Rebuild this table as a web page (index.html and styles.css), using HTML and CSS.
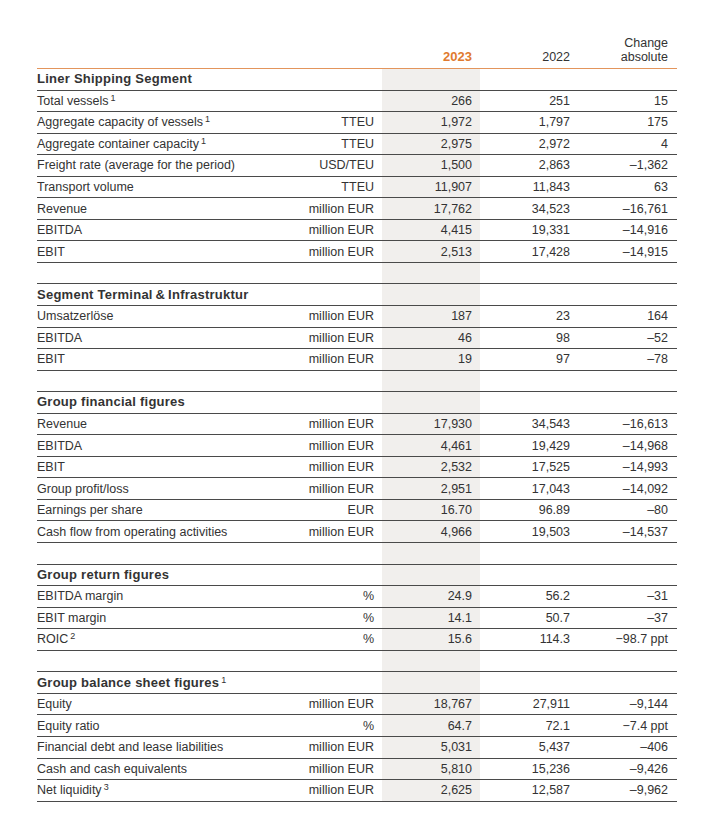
FILE: index.html
```html
<!DOCTYPE html>
<html lang="en">
<head>
<meta charset="utf-8">
<title>Key figures</title>
<link rel="stylesheet" href="styles.css">
</head>
<body>
<table class="kf">
  <colgroup>
    <col class="c-label"><col class="c-unit"><col class="c-cur"><col class="c-prev"><col class="c-chg">
  </colgroup>
  <thead>
    <tr>
      <th></th><th></th>
      <th class="num cur-h">2023</th>
      <th class="num">2022</th>
      <th class="num">Change<br>absolute</th>
    </tr>
  </thead>
  <tbody>
    <tr class="title"><td colspan="2">Liner Shipping Segment</td><td class="cur"></td><td></td><td></td></tr>
    <tr><td>Total vessels<sup>1</sup></td><td class="unit"></td><td class="num cur">266</td><td class="num">251</td><td class="num">15</td></tr>
    <tr><td>Aggregate capacity of vessels<sup>1</sup></td><td class="unit">TTEU</td><td class="num cur">1,972</td><td class="num">1,797</td><td class="num">175</td></tr>
    <tr><td>Aggregate container capacity<sup>1</sup></td><td class="unit">TTEU</td><td class="num cur">2,975</td><td class="num">2,972</td><td class="num">4</td></tr>
    <tr><td>Freight rate (average for the period)</td><td class="unit">USD/TEU</td><td class="num cur">1,500</td><td class="num">2,863</td><td class="num">–1,362</td></tr>
    <tr><td>Transport volume</td><td class="unit">TTEU</td><td class="num cur">11,907</td><td class="num">11,843</td><td class="num">63</td></tr>
    <tr><td>Revenue</td><td class="unit">million EUR</td><td class="num cur">17,762</td><td class="num">34,523</td><td class="num">–16,761</td></tr>
    <tr><td>EBITDA</td><td class="unit">million EUR</td><td class="num cur">4,415</td><td class="num">19,331</td><td class="num">–14,916</td></tr>
    <tr><td>EBIT</td><td class="unit">million EUR</td><td class="num cur">2,513</td><td class="num">17,428</td><td class="num">–14,915</td></tr>
    <tr class="gap"><td colspan="2"></td><td class="cur"></td><td></td><td></td></tr>

    <tr class="title"><td colspan="2">Segment Terminal&#8201;&amp;&#8201;Infrastruktur</td><td class="cur"></td><td></td><td></td></tr>
    <tr><td>Umsatzerlöse</td><td class="unit">million EUR</td><td class="num cur">187</td><td class="num">23</td><td class="num">164</td></tr>
    <tr><td>EBITDA</td><td class="unit">million EUR</td><td class="num cur">46</td><td class="num">98</td><td class="num">–52</td></tr>
    <tr><td>EBIT</td><td class="unit">million EUR</td><td class="num cur">19</td><td class="num">97</td><td class="num">–78</td></tr>
    <tr class="gap"><td colspan="2"></td><td class="cur"></td><td></td><td></td></tr>

    <tr class="title"><td colspan="2">Group financial figures</td><td class="cur"></td><td></td><td></td></tr>
    <tr><td>Revenue</td><td class="unit">million EUR</td><td class="num cur">17,930</td><td class="num">34,543</td><td class="num">–16,613</td></tr>
    <tr><td>EBITDA</td><td class="unit">million EUR</td><td class="num cur">4,461</td><td class="num">19,429</td><td class="num">–14,968</td></tr>
    <tr><td>EBIT</td><td class="unit">million EUR</td><td class="num cur">2,532</td><td class="num">17,525</td><td class="num">–14,993</td></tr>
    <tr><td>Group profit/loss</td><td class="unit">million EUR</td><td class="num cur">2,951</td><td class="num">17,043</td><td class="num">–14,092</td></tr>
    <tr><td>Earnings per share</td><td class="unit">EUR</td><td class="num cur">16.70</td><td class="num">96.89</td><td class="num">–80</td></tr>
    <tr><td>Cash flow from operating activities</td><td class="unit">million EUR</td><td class="num cur">4,966</td><td class="num">19,503</td><td class="num">–14,537</td></tr>
    <tr class="gap"><td colspan="2"></td><td class="cur"></td><td></td><td></td></tr>

    <tr class="title"><td colspan="2">Group return figures</td><td class="cur"></td><td></td><td></td></tr>
    <tr><td>EBITDA margin</td><td class="unit">%</td><td class="num cur">24.9</td><td class="num">56.2</td><td class="num">–31</td></tr>
    <tr><td>EBIT margin</td><td class="unit">%</td><td class="num cur">14.1</td><td class="num">50.7</td><td class="num">–37</td></tr>
    <tr><td>ROIC<sup>2</sup></td><td class="unit">%</td><td class="num cur">15.6</td><td class="num">114.3</td><td class="num">−98.7 ppt</td></tr>
    <tr class="gap"><td colspan="2"></td><td class="cur"></td><td></td><td></td></tr>

    <tr class="title"><td colspan="2">Group balance sheet figures<sup>1</sup></td><td class="cur"></td><td></td><td></td></tr>
    <tr><td>Equity</td><td class="unit">million EUR</td><td class="num cur">18,767</td><td class="num">27,911</td><td class="num">–9,144</td></tr>
    <tr><td>Equity ratio</td><td class="unit">%</td><td class="num cur">64.7</td><td class="num">72.1</td><td class="num">−7.4 ppt</td></tr>
    <tr><td>Financial debt and lease liabilities</td><td class="unit">million EUR</td><td class="num cur">5,031</td><td class="num">5,437</td><td class="num">–406</td></tr>
    <tr><td>Cash and cash equivalents</td><td class="unit">million EUR</td><td class="num cur">5,810</td><td class="num">15,236</td><td class="num">–9,426</td></tr>
    <tr><td>Net liquidity<sup>3</sup></td><td class="unit">million EUR</td><td class="num cur">2,625</td><td class="num">12,587</td><td class="num">–9,962</td></tr>
  </tbody>
</table>
</body>
</html>
```

FILE: styles.css
```css
html, body {
  margin: 0;
  padding: 0;
  background: #ffffff;
}

body {
  padding: 36px 0 0 37px;
  font-family: "Liberation Sans", Arial, sans-serif;
  font-size: 12.5px;
  color: #333333;
}

.kf {
  border-collapse: collapse;
  table-layout: fixed;
  width: 640px;
}

.c-label { width: 263px; }
.c-unit  { width: 82px; }
.c-cur   { width: 98px; }
.c-prev  { width: 98px; }
.c-chg   { width: 99px; }

.kf th {
  font-weight: normal;
  line-height: 14px;
  padding: 0 8px 4px 0;
  vertical-align: bottom;
  border-bottom: 1px solid #e3955c;
}

.kf th:last-child { padding-right: 9px; }

.kf th.cur-h {
  color: #e07a2f;
  font-weight: bold;
  font-size: 13px;
}

.kf td {
  height: 20.56px;
  padding: 0 8px 0 0;
  line-height: 14px;
  vertical-align: middle;
  border-bottom: 1px solid #4a4a4a;
  white-space: nowrap;
}

.kf td:last-child { padding-right: 9px; }

.kf .num, .kf .unit { text-align: right; }

.kf .cur { background: #f1efed; }

.kf .title td:first-child {
  font-weight: bold;
  font-size: 13px;
  letter-spacing: 0.25px;
}

.kf sup {
  font-size: 9px;
  line-height: 0;
  vertical-align: 4px;
  margin-left: 2px;
  letter-spacing: 0;
  font-weight: normal;
  color: #333333;
}
```
